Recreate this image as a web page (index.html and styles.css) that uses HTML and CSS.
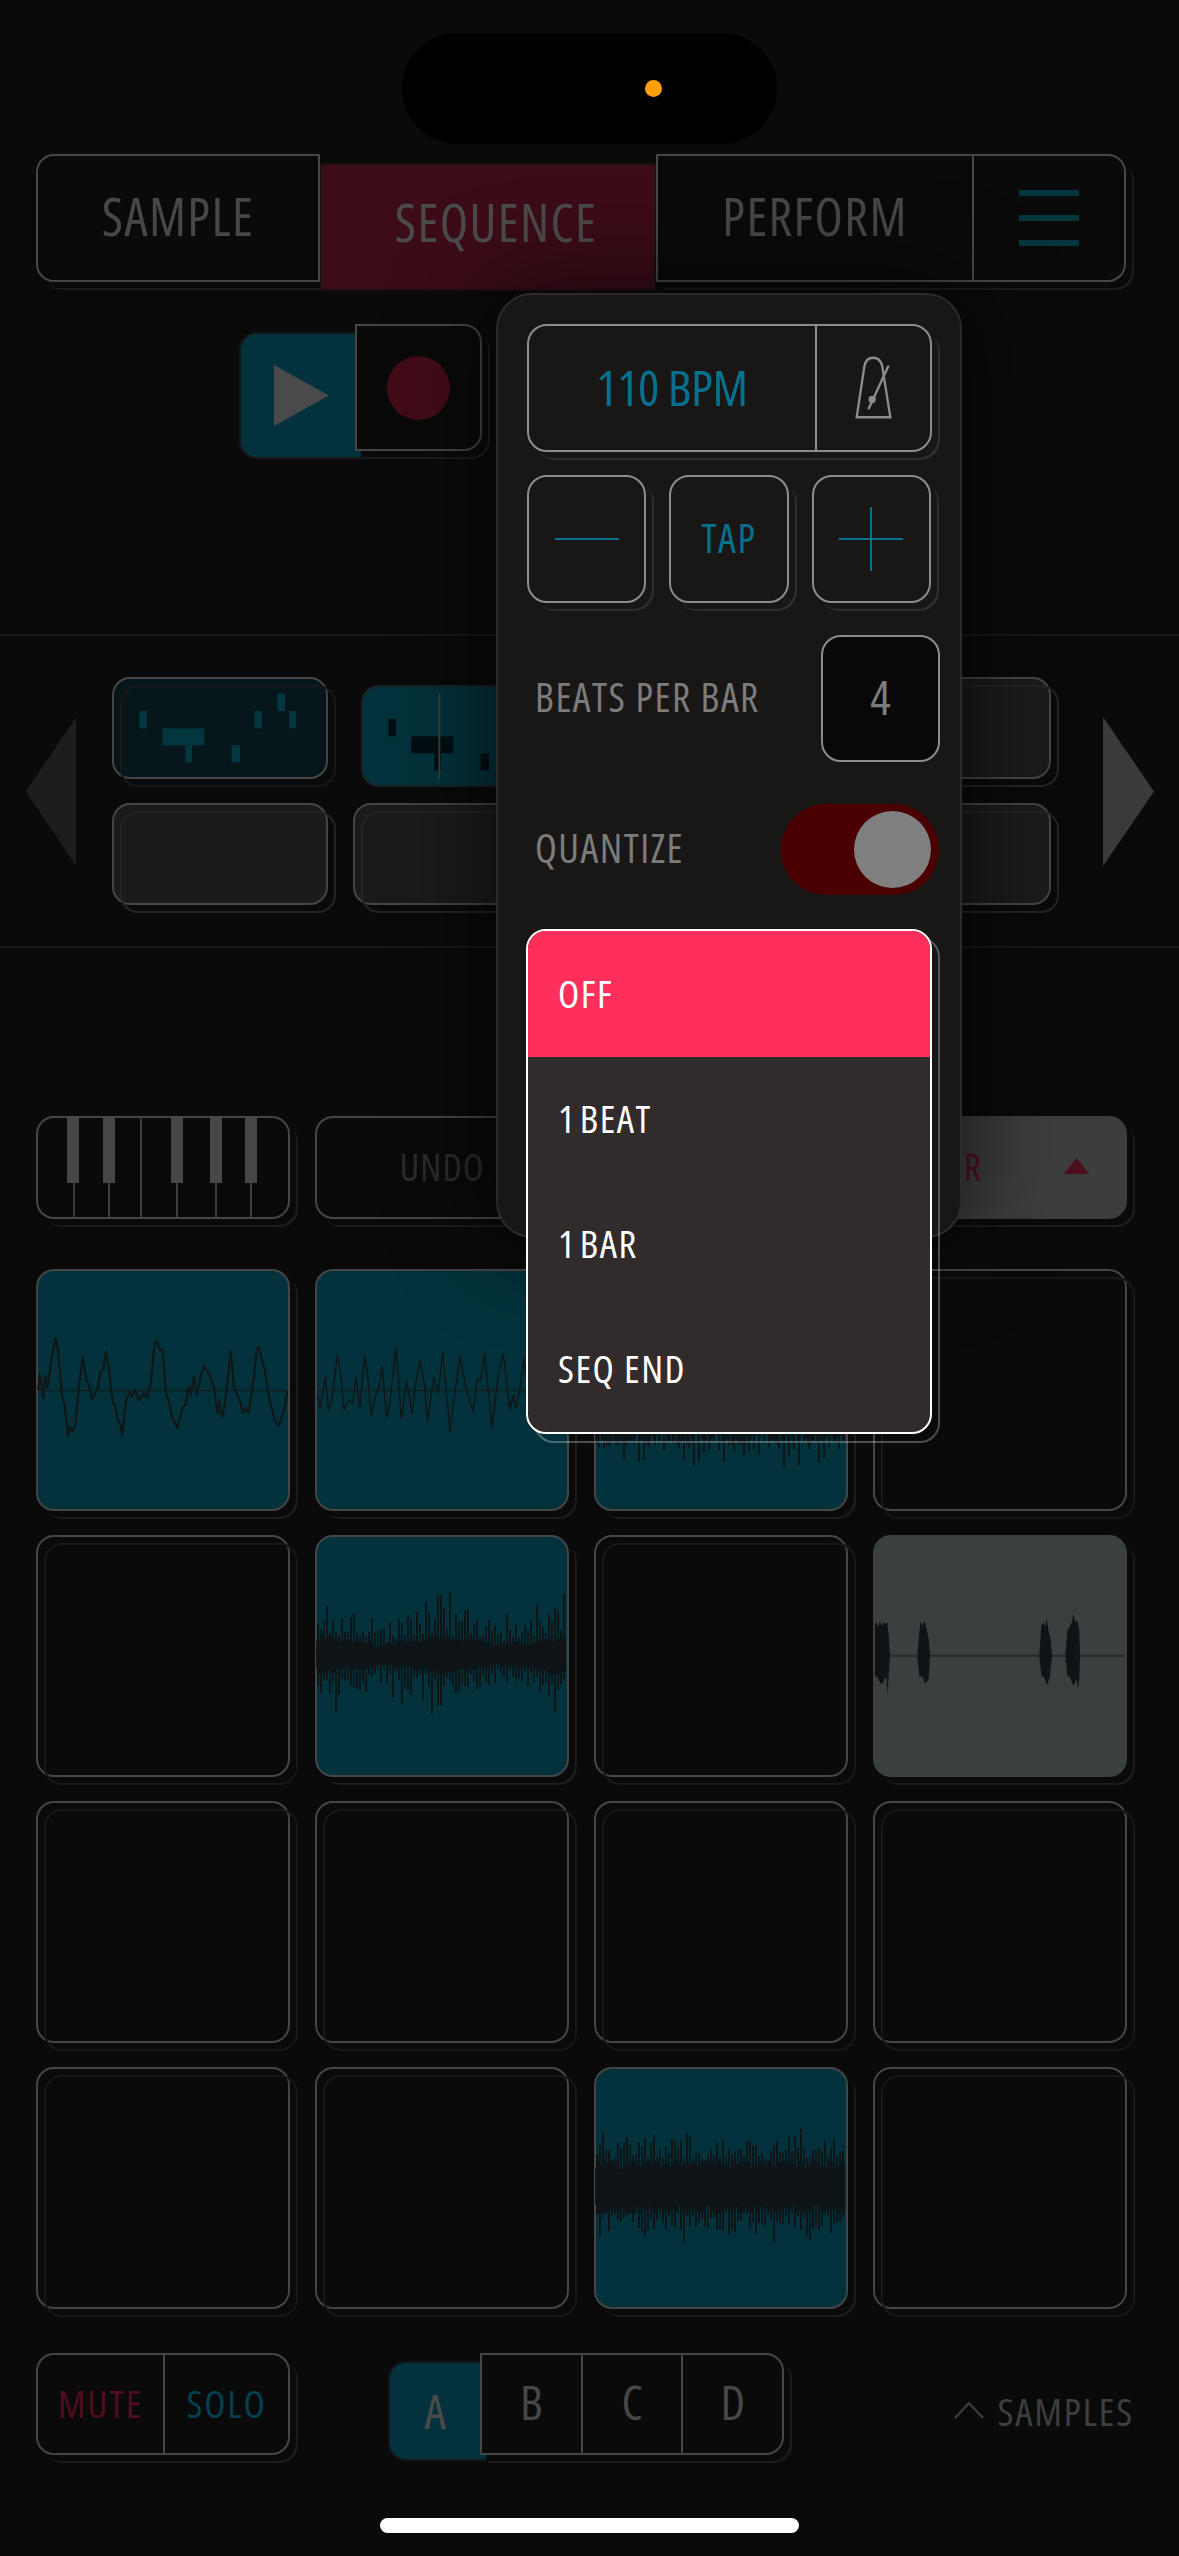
FILE: index.html
```html
<!DOCTYPE html>
<html lang="en">
<head>
<meta charset="utf-8">
<title>Sequencer</title>
<link rel="stylesheet" href="styles.css">
</head>
<body>
<main class="page">
  <header class="status"><div class="island"><span class="dot"></span></div></header>

  <nav class="tabs">
    <div class="tab tab-sample ext">SAMPLE</div>
    <div class="tab tab-sequence">SEQUENCE</div>
    <div class="tab-group ext">
      <div class="tab tab-perform">PERFORM</div>
      <div class="tab tab-menu"><span></span><span></span><span></span></div>
    </div>
  </nav>

  <section class="transport">
    <div class="play"><svg width="55" height="61" viewBox="0 0 55 61"><path class="play-tri" d="M0 0 L55 30.5 L0 61 Z"/></svg></div>
    <div class="record ext"><span class="rec-dot"></span></div>
  </section>

  <section class="slots">
    <svg class="arrow" width="50" height="149" viewBox="0 0 50 149"><path class="arrow-l" d="M50 0 L0 74.5 L50 149 Z"/></svg>
    <div class="slot-grid">
      <div class="slot slot-dim see">
        <svg class="notes" viewBox="36 22 648 306"><g class="notes-teal"><rect x="118" y="124" width="23" height="52"/><rect x="187" y="176" width="126" height="51"/><rect x="256" y="227" width="20" height="51"/><rect x="395" y="227" width="25" height="51"/><rect x="463" y="124" width="23" height="52"/><rect x="532" y="72" width="23" height="52"/><rect x="567" y="124" width="21" height="52"/></g></svg>
      </div>
      <div class="slot slot-active">
        <svg class="notes" viewBox="36 22 648 306"><g class="notes-dark"><rect x="118" y="124" width="23" height="52"/><rect x="187" y="176" width="126" height="51"/><rect x="256" y="227" width="20" height="51"/><rect x="395" y="227" width="25" height="51"/><rect x="463" y="124" width="23" height="52"/><rect x="532" y="72" width="23" height="52"/><rect x="567" y="124" width="21" height="52"/></g><path class="playhead" d="M271 48 V304"/></svg>
      </div>
      <div class="slot slot-empty see"></div>
      <div class="slot slot-empty see"></div>
      <div class="slot slot-empty see"></div>
      <div class="slot slot-empty see"></div>
      <div class="slot slot-empty see"></div>
      <div class="slot slot-empty see"></div>
    </div>
    <svg class="arrow arrow-right" width="51" height="149" viewBox="0 0 51 149"><path class="arrow-r" d="M0 0 L51 74.5 L0 149 Z"/></svg>
  </section>

  <section class="toolbar">
    <div class="tool ext keys">
      <svg width="254" height="103" viewBox="0 0 254 103">
        <path class="key-lines" d="M38 66 V101 M73 66 V101 M105 0 V101 M141 66 V101 M180 66 V101 M215 66 V101"/>
        <g class="key-black"><rect x="31" width="12" height="67"/><rect x="67" width="12" height="67"/><rect x="135" width="12" height="67"/><rect x="174" width="12" height="67"/><rect x="209" width="12" height="67"/></g>
      </svg>
    </div>
    <div class="tool ext undo">UNDO</div>
    <div class="tool order"><span class="order-label">ORDER</span><svg width="25" height="16" viewBox="0 0 25 16"><path class="order-tri" d="M12.5 0 L25 16 L0 16 Z"/></svg></div>
  </section>

  <section class="pads">
    <div class="pad teal ext">
      <svg class="wave" viewBox="18 -93 762 726">
        <path class="wave-base" d="M24 272 H772"/>
        <path class="wave-line" d="M24 270 L30 225 36 265 40 295 46 228 52 262 66 170 76 115 84 150 96 285 104 315 114 408 120 382 128 395 136 375 146 265 158 172 170 245 176 250 186 298 204 262 212 212 220 210 228 155 236 200 248 305 256 320 262 355 270 370 277 405 288 300 300 278 306 290 316 268 326 302 342 280 352 292 362 250 374 130 380 122 390 150 398 150 408 280 418 310 426 352 442 384 458 322 466 315 476 260 482 285 492 230 500 285 512 230 522 198 540 228 552 260 562 338 568 300 572 338 578 352 590 270 602 152 612 262 625 290 640 338 646 322 656 338 672 230 680 150 686 142 704 210 716 290 734 360 746 378 764 325 772 270"/>
      </svg>
    </div>
    <div class="pad teal ext">
      <svg class="wave" viewBox="15 -153 762 726">
        <path class="wave-base" d="M22 212 H760"/>
        <path class="wave-line wave-thin" d="M22 225 L30 265 46 172 56 270 66 238 82 105 92 160 102 268 118 238 128 252 138 172 150 260 164 108 172 155 184 288 196 230 206 205 216 140 230 292 238 260 258 84 274 296 290 182 306 280 316 195 330 122 344 195 352 305 372 172 384 220 398 96 420 335 430 255 450 108 468 205 490 275 502 175 512 180 524 102 546 322 566 155 580 102 600 270 610 225 618 262 630 205 642 115 660 260 680 120 700 270 720 150 740 240 758 212"/>
      </svg>
    </div>
    <div class="pad teal ext"><svg class="wave" viewBox="0 0 254 242"><path class="noise" data-seed="7" data-core="45" data-lo="50" data-hi="82" data-step="5"/></svg></div>
    <div class="pad see"></div>

    <div class="pad see"></div>
    <div class="pad teal ext"><svg class="wave" viewBox="0 0 254 242"><path class="noise" data-seed="21" data-core="15" data-lo="20" data-hi="66" data-step="3" data-swell="1"/></svg></div>
    <div class="pad see"></div>
    <div class="pad gray ext">
      <svg class="wave" viewBox="39 -162 762 726">
        <path class="gray-base" d="M46 200 H795"/>
        <g class="bursts">
          <path d="M45 200 L45 105 50 100 54 115 60 97 66 110 72 100 76 105 82 100 86 140 90 200 86 260 82 320 80 270 75 265 70 280 62 285 55 270 48 260 45 265 Z"/>
          <path d="M172 200 L178 130 182 95 186 110 194 95 200 120 206 150 210 200 206 270 196 285 188 265 178 262 Z"/>
          <path d="M538 200 L544 110 550 100 556 115 560 85 566 130 572 150 576 200 570 260 562 288 552 265 544 260 Z"/>
          <path d="M616 200 L622 125 630 110 636 100 640 75 646 100 652 95 658 125 660 200 658 270 654 300 650 270 640 290 630 265 622 260 Z"/>
        </g>
      </svg>
    </div>

    <div class="pad see"></div><div class="pad see"></div><div class="pad see"></div><div class="pad see"></div>

    <div class="pad see"></div>
    <div class="pad see"></div>
    <div class="pad teal ext"><svg class="wave" viewBox="0 0 254 242"><path class="noise" data-seed="42" data-core="21" data-lo="26" data-hi="60" data-step="3"/></svg></div>
    <div class="pad see"></div>
  </section>

  <footer class="bottom">
    <div class="seg mute-solo ext"><div class="seg-cell mute">MUTE</div><div class="seg-cell solo">SOLO</div></div>
    <div class="banks">
      <div class="bank-a">A</div>
      <div class="seg bank-rest ext"><div class="seg-cell bank">B</div><div class="seg-cell bank">C</div><div class="seg-cell bank">D</div></div>
    </div>
    <div class="samples"><svg width="30" height="17" viewBox="0 0 30 17"><path class="caret" d="M1 16 L15 1 L29 16"/></svg><span>SAMPLES</span></div>
  </footer>

  <div class="home-wrap"><div class="home"></div></div>

  <aside class="panel">
    <div class="bpm ctl">
      <div class="bpm-value">110 BPM</div>
      <div class="bpm-icon">
        <svg width="37" height="64" viewBox="1062 170 110 190">
          <path class="metro" d="M1067 352 L1090 200 Q1095 175 1116 175 Q1137 175 1143 200 L1167 352 Z"/>
          <path class="metro" d="M1102 328 L1162 198"/>
          <circle class="metro-bob" cx="1113" cy="299" r="11"/>
        </svg>
      </div>
    </div>
    <div class="steppers">
      <div class="ctl step"><svg width="64" height="64" viewBox="0 0 64 64"><path class="glyph" d="M0 32 H64"/></svg></div>
      <div class="ctl step tap">TAP</div>
      <div class="ctl step"><svg width="64" height="64" viewBox="0 0 64 64"><path class="glyph" d="M0 32 H64 M32 0 V64"/></svg></div>
    </div>
    <div class="field beats">
      <span class="field-label">BEATS PER BAR</span>
      <div class="ctl beat-box">4</div>
    </div>
    <div class="field quant">
      <span class="field-label">QUANTIZE</span>
      <div class="toggle"><span class="knob"></span></div>
    </div>
    <div class="menu-wrap">
      <ul class="menu">
        <li class="menu-item menu-on">OFF</li>
        <li class="menu-item menu-tight">1 BEAT</li>
        <li class="menu-item menu-tight">1 BAR</li>
        <li class="menu-item">SEQ END</li>
      </ul>
    </div>
  </aside>
</main>
<script src="app.js"></script>
</body>
</html>
```
FILE: styles.css
```css
* { box-sizing: border-box; }
html, body { margin: 0; padding: 0; background: #0a0a0a; }
body { font-family: "Open Sans", sans-serif; font-stretch: 75%; font-weight: 400; }

.page { position: relative; width: 1179px; height: 2556px; overflow: hidden; background: #0a0a0a; line-height: 1; }

.status { height: 154px; padding-top: 33px; display: flex; justify-content: center; }
.island { position: relative; width: 375px; height: 111px; border-radius: 56px; background: #000; }
.dot { position: absolute; left: 243px; top: 47px; width: 17px; height: 17px; border-radius: 50%; background: #ff9f0a; }

.ext { box-shadow: 6px 6px 0 #0a0a0a, 8px 8px 0 #1c1c1c; }

/* tabs */
.tabs { display: flex; height: 128px; margin-left: 36px; width: 1090px; }
.tab { display: flex; align-items: center; justify-content: center; padding-bottom: 4px; font-size: 52px; letter-spacing: 1.4px; color: #474747; border: 2px solid #474747; background: #0a0a0a; }
.tab-sample { position: relative; z-index: 2; width: 284px; border-radius: 18px 0 0 18px; clip-path: inset(0 0 -12px -2px); }
.tab-sequence { width: 336px; transform: translateY(9px); background: #3c0c18; border-color: #1b1014; padding-bottom: 10px; padding-left: 16px; color: #4b4b4b; }
.tab-group { position: relative; z-index: 2; display: flex; width: 470px; border-radius: 0 18px 18px 0; }
.tab-perform { width: 318px; }
.tab-menu { flex: 1; flex-direction: column; gap: 19px; border-left: 0; border-radius: 0 18px 18px 0; padding-bottom: 0; }
.tab-menu span { display: block; width: 60px; height: 6px; background: #03363f; }

/* transport */
.transport { display: flex; height: 352px; padding: 42px 0 0 231px; }
.play { width: 124px; height: 127px; display: flex; align-items: center; justify-content: center; background: #03323c; border: 2px solid #14181a; border-radius: 18px 0 0 18px; transform: translate(8px, 8px); }
.play-tri { fill: #4a4a4a; }
.record { position: relative; z-index: 1; width: 127px; height: 127px; display: flex; align-items: center; justify-content: center; background: #0a0a0a; border: 2px solid #454545; border-radius: 0 18px 18px 0; }
.rec-dot { width: 63px; height: 64px; border-radius: 50%; background: #420c18; }

/* pattern slots */
.slots { display: flex; align-items: center; height: 314px; padding-left: 26px; border-top: 2px solid #181818; border-bottom: 2px solid #181818; }
.arrow { flex: none; margin-right: 36px; }
.arrow-l { fill: #1d1d1d; }
.arrow-right { margin: 0 0 0 52px; }
.arrow-r { fill: #3a3a3a; }
.slot-grid { display: grid; grid-template-columns: repeat(4, 216px); grid-auto-rows: 102px; gap: 24px 25px; }
.slot { position: relative; border: 2px solid #454545; border-radius: 18px; }
.see::before { content: ""; position: absolute; left: 6px; top: 6px; right: -10px; bottom: -10px; border: 2px solid #181818; border-radius: inherit; }
.slot-dim { background: #06161b; }
.slot-active { background: #03323c; border-color: #1a2225; transform: translate(8px, 8px); }
.slot-empty { background: #1b1b1b; }
.slot-empty::before { border-color: #242424; }
.notes { position: absolute; inset: -2px; width: 216px; height: 102px; }
.notes-teal { fill: #03363f; }
.notes-dark { fill: #020e11; }
.playhead { stroke: #3e3e3e; stroke-width: 6; fill: none; }

/* toolbar */
.toolbar { display: flex; gap: 25px; height: 103px; margin: 168px 0 0 36px; width: 1091px; }
.tool { height: 103px; width: 254px; display: flex; align-items: center; justify-content: center; padding-bottom: 3px; border: 2px solid #454545; border-radius: 18px; background: #0a0a0a; font-size: 38px; letter-spacing: 1px; color: #2b2b2b; }
.keys { padding: 0; overflow: visible; }
.keys svg { flex: none; margin: -2px; }
.key-lines { stroke: #3c3c3c; stroke-width: 2; fill: none; }
.key-black { fill: #474747; }
.order { width: 533px; background: #3d3d3d; border-color: #3d3d3d; justify-content: flex-end; gap: 82px; padding-right: 36px; color: #4e0f1d; box-shadow: 6px 6px 0 #0a0a0a, 8px 8px 0 #1c1c1c; }
.order-tri { fill: #4e0f1d; }

/* pads */
.pads { display: grid; grid-template-columns: repeat(4, 254px); grid-auto-rows: 242px; gap: 24px 25px; margin: 50px 0 0 36px; }
.pad { position: relative; border: 2px solid #454545; border-radius: 18px; background: transparent; }
.teal { background: #03323c; }
.gray { background: #3a3f3f; border-color: #3a3f3f; }
.wave { position: absolute; inset: -2px; width: 254px; height: 242px; overflow: hidden; }
.wave-base { stroke: #0e2024; stroke-width: 5; fill: none; }
.wave-line { stroke: #101516; stroke-width: 6; fill: none; stroke-linejoin: round; }
.wave-thin { stroke-width: 4; }
.noise { stroke: #0e1416; stroke-width: 1.8; fill: none; }
.gray-base { stroke: #262a2a; stroke-width: 6; fill: none; }
.bursts { fill: #0e1416; }

/* bottom row */
.bottom { display: flex; height: 102px; margin: 44px 0 0 36px; width: 1098px; }
.seg { display: flex; border: 2px solid #454545; border-radius: 18px; background: #0a0a0a; }
.seg-cell { display: flex; align-items: center; justify-content: center; height: 100%; padding-bottom: 4px; }
.seg-cell + .seg-cell { border-left: 2px solid #454545; }
.mute-solo { width: 254px; }
.mute-solo .seg-cell { width: 50%; font-size: 39px; letter-spacing: 1.8px; }
.mute { color: #4f0d1e; }
.solo { color: #03404f; }
.banks { display: flex; margin-left: 90px; }
.bank-a { width: 100px; height: 100px; display: flex; align-items: center; justify-content: center; padding-right: 6px; font-size: 48px; color: #4a4a4a; background: #03323c; border: 2px solid #14181a; border-radius: 18px 0 0 18px; transform: translate(8px, 8px); }
.bank-rest { position: relative; z-index: 1; width: 304px; border-radius: 0 18px 18px 0; }
.bank { flex: 1; font-size: 48px; color: #474747; }
.samples { display: flex; align-items: center; gap: 13px; margin-left: auto; padding-top: 12px; font-size: 39px; letter-spacing: 1.8px; color: #3e3e3e; }
.caret { stroke: #3e3e3e; stroke-width: 2; fill: none; }

.home-wrap { display: flex; justify-content: center; margin-top: 63px; }
.home { width: 419px; height: 15px; border-radius: 8px; background: #fff; }

/* bpm popover */
.panel { position: absolute; left: 496px; top: 293px; width: 466px; height: 945px; padding: 29px 29px; display: flex; flex-direction: column; background: #181716; border: 2px solid #2b2b2b; border-radius: 36px; box-shadow: 0 0 90px 10px rgba(0,0,0,.6); z-index: 5; }
.ctl { position: relative; border: 2px solid #8c8c8c; border-radius: 20px; background: #181716; box-shadow: 6px 6px 0 #181716, 8px 8px 0 #2e2e2e; }
.bpm { display: flex; width: 405px; height: 128px; }
.bpm-value { width: 286px; display: flex; align-items: center; justify-content: center; padding-bottom: 3px; font-size: 50px; letter-spacing: -0.4px; color: #06708f; }
.bpm-icon { flex: 1; display: flex; align-items: center; justify-content: center; border-left: 2px solid #8c8c8c; }
.metro { stroke: #8c8c8c; stroke-width: 7; fill: none; }
.metro-bob { fill: #8c8c8c; }
.steppers { display: flex; gap: 23px; margin-top: 23px; }
.step { width: 120px; height: 128px; display: flex; align-items: center; justify-content: center; }
.tap { font-size: 40px; letter-spacing: 1.6px; padding-bottom: 2px; color: #06708f; }
.glyph { stroke: #06708f; stroke-width: 2; fill: none; }
.field { display: flex; align-items: center; justify-content: space-between; width: 413px; padding-left: 8px; }
.field-label { padding-bottom: 3px; font-size: 40px; letter-spacing: 1.5px; color: #7c7c7c; }
.beats { margin-top: 32px; }
.beat-box { width: 119px; height: 127px; display: flex; align-items: center; justify-content: center; padding-bottom: 3px; font-size: 48px; color: #7c7c7c; background: #080808; box-shadow: none; }
.quant { margin-top: 42px; }
.toggle { position: relative; width: 158px; height: 91px; margin-right: 1px; border-radius: 46px; background: #4a0000; }
.knob { position: absolute; left: 73px; top: 7px; width: 77px; height: 77px; border-radius: 50%; background: #808080; }

.menu-wrap { position: absolute; left: 28px; top: 634px; width: 406px; height: 505px; z-index: 6; }
.menu-wrap::before { content: ""; position: absolute; left: 8px; top: 8px; right: -8px; bottom: -9px; border: 2px solid rgba(255,255,255,.28); border-radius: 20px; }
.menu { position: relative; margin: 0; padding: 0; list-style: none; height: 100%; border: 2px solid #fff; border-radius: 20px; overflow: hidden; background: #312b2b; }
.menu-item { display: flex; align-items: center; height: 125px; padding: 0 0 4px 30px; font-size: 39px; letter-spacing: 1.5px; color: #fff; }
.menu-on { height: 126px; background: #ff2f5c; }
.menu-tight { word-spacing: -5px; }
```
FILE: app.js
```js
// Draws the noisy sample waveforms from a small seeded generator.
document.querySelectorAll('.noise').forEach(function (path) {
  var s = Number(path.dataset.seed);
  var core = Number(path.dataset.core);
  var lo = Number(path.dataset.lo);
  var hi = Number(path.dataset.hi);
  var step = Number(path.dataset.step);
  var swell = path.dataset.swell ? 1 : 0;
  var cy = 120;
  function rnd() {
    s = (s * 1664525 + 1013904223) % 4294967296;
    return s / 4294967296;
  }
  function spike() {
    return lo + Math.sqrt(rnd()) * rnd() * (hi - lo);
  }
  var d = '';
  for (var x = 2; x < 251; x += 1) {
    var env = swell ? 0.85 + 0.18 * Math.sin(x / 19 + 1) + 0.08 * Math.sin(x / 6) : 1;
    var up, down;
    if (x % step === 0) {
      up = spike() * env;
      down = spike() * env;
    } else {
      up = core * (0.8 + rnd() * 0.45) * env;
      down = core * (0.8 + rnd() * 0.45) * env;
    }
    d += 'M' + x + ' ' + (cy - up).toFixed(1) + 'V' + (cy + down).toFixed(1);
  }
  path.setAttribute('d', d);
});
```
